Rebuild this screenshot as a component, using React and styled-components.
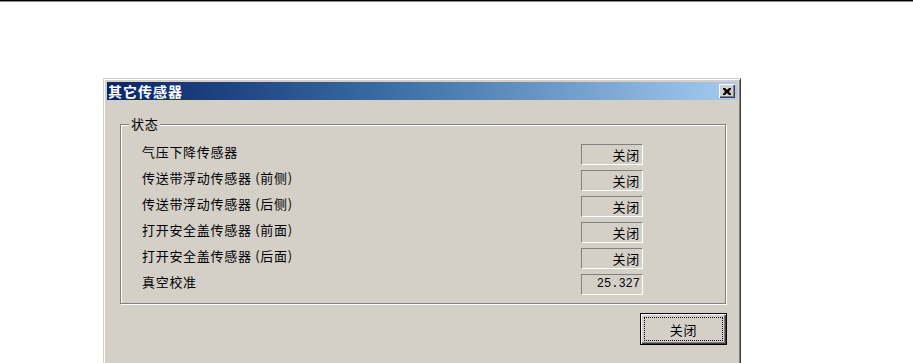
import React from 'react';
import styled, { createGlobalStyle } from 'styled-components';

const GlobalStyle = createGlobalStyle`
    html, body {
        margin: 0;
        padding: 0;
        background: #ffffff;
    }
`

const Page = styled.div`
    width: 913px;
    height: 363px;
    overflow: hidden;
    background: #ffffff;
    font-family: "Noto Sans CJK SC", "Noto Sans", sans-serif;
`

const TopRule = styled.div`
    height: 1px;
    background: #000000;
    border-bottom: 1px solid #8a8a8a;
`

const Window = styled.div`
    margin: 76px 0 0 103px;
    width: 638px;
    height: 300px;
    box-sizing: border-box;
    padding: 3px;
    background: #d4d0c8;
    border: 1px solid;
    border-color: #d4d0c8 #404040 #404040 #d4d0c8;
    box-shadow: inset 1px 1px 0 #ffffff, inset -1px -1px 0 #808080;
`

const TitleBar = styled.div`
    display: flex;
    align-items: center;
    justify-content: space-between;
    height: 18px;
    padding: 0 2px 0 1px;
    background: linear-gradient(to right, #0a246a 0%, #3a6ea5 45%, #a6caf0 100%);
`

const Title = styled.span`
    color: #ffffff;
    font-size: 14px;
    font-weight: bold;
    letter-spacing: 1px;
    line-height: 18px;
`

const CloseBox = styled.button`
    display: flex;
    align-items: center;
    justify-content: center;
    width: 16px;
    height: 14px;
    padding: 0;
    border: none;
    background: #d4d0c8;
    box-shadow: inset 1px 1px 0 #ffffff, inset -1px -1px 0 #404040, inset -2px -2px 0 #808080;
`

const Body = styled.div`
    padding: 17px 11px 0 13px;
`

const Group = styled.fieldset`
    margin: 0;
    padding: 0 0 8px 8px;
    min-width: 0;
    border: 1px solid #808080;
    box-shadow: inset 1px 1px 0 #ffffff, 1px 1px 0 #ffffff;
`

const Legend = styled.legend`
    padding: 0 2px;
    font-size: 13px;
    line-height: 14px;
    letter-spacing: 0.7px;
    color: #000000;
    background: #d4d0c8;
`

const Rows = styled.div`
    display: grid;
    grid-template-columns: 439px 62px;
    row-gap: 5px;
    padding: 13px 0 0 13px;
`

const Label = styled.span`
    align-self: start;
    font-size: 13px;
    line-height: 15px;
    letter-spacing: 0.7px;
    color: #000000;
    white-space: nowrap;
`

const Value = styled.div`
    height: 21px;
    box-sizing: border-box;
    padding-right: 2px;
    border: 1px solid;
    border-color: #808080 #ffffff #ffffff #808080;
    text-align: right;
    font-size: ${({ mono }) => (mono ? '12px' : '13px')};
    font-family: ${({ mono }) => (mono ? '"Liberation Mono", monospace' : 'inherit')};
    letter-spacing: ${({ mono }) => (mono ? '0' : '0.7px')};
    line-height: 19px;
    color: #000000;
`

const Footer = styled.div`
    display: flex;
    justify-content: flex-end;
    padding: 9px 0 0 0;
    margin-right: -1px;
`

const DefaultButton = styled.button`
    display: flex;
    width: 87px;
    height: 32px;
    box-sizing: border-box;
    padding: 3px;
    border: 1px solid #000000;
    background: #d4d0c8;
    box-shadow: inset 1px 1px 0 #ffffff, inset -1px -1px 0 #404040, inset -2px -2px 0 #808080;
    font-family: inherit;
`

const FocusRing = styled.span`
    flex: 1;
    display: flex;
    align-items: center;
    justify-content: center;
    border: 1px dotted #000000;
    font-size: 13px;
    letter-spacing: 0.7px;
    color: #000000;
`

const sensors = [
    { name: '气压下降传感器', value: '关闭' },
    { name: '传送带浮动传感器 (前侧)', value: '关闭' },
    { name: '传送带浮动传感器 (后侧)', value: '关闭' },
    { name: '打开安全盖传感器 (前面)', value: '关闭' },
    { name: '打开安全盖传感器 (后面)', value: '关闭' },
    { name: '真空校准', value: '25.327', mono: true },
]

const App = () => {
    return (
        <Page>
            <GlobalStyle />
            <TopRule />
            <Window>
                <TitleBar>
                    <Title>其它传感器</Title>
                    <CloseBox>
                        <svg width="8" height="7" viewBox="0 0 8 7">
                            <path d="M0 0h2l2 2 2-2h2v1L6 3.5 8 6v1H6L4 5 2 7H0V6l2-2.5L0 1z" fill="#000" />
                        </svg>
                    </CloseBox>
                </TitleBar>
                <Body>
                    <Group>
                        <Legend>状态</Legend>
                        <Rows>
                            {sensors.map((s) => (
                                <React.Fragment key={s.name}>
                                    <Label>{s.name}</Label>
                                    <Value mono={s.mono}>{s.value}</Value>
                                </React.Fragment>
                            ))}
                        </Rows>
                    </Group>
                    <Footer>
                        <DefaultButton>
                            <FocusRing>关闭</FocusRing>
                        </DefaultButton>
                    </Footer>
                </Body>
            </Window>
        </Page>
    )
}

export default App;
